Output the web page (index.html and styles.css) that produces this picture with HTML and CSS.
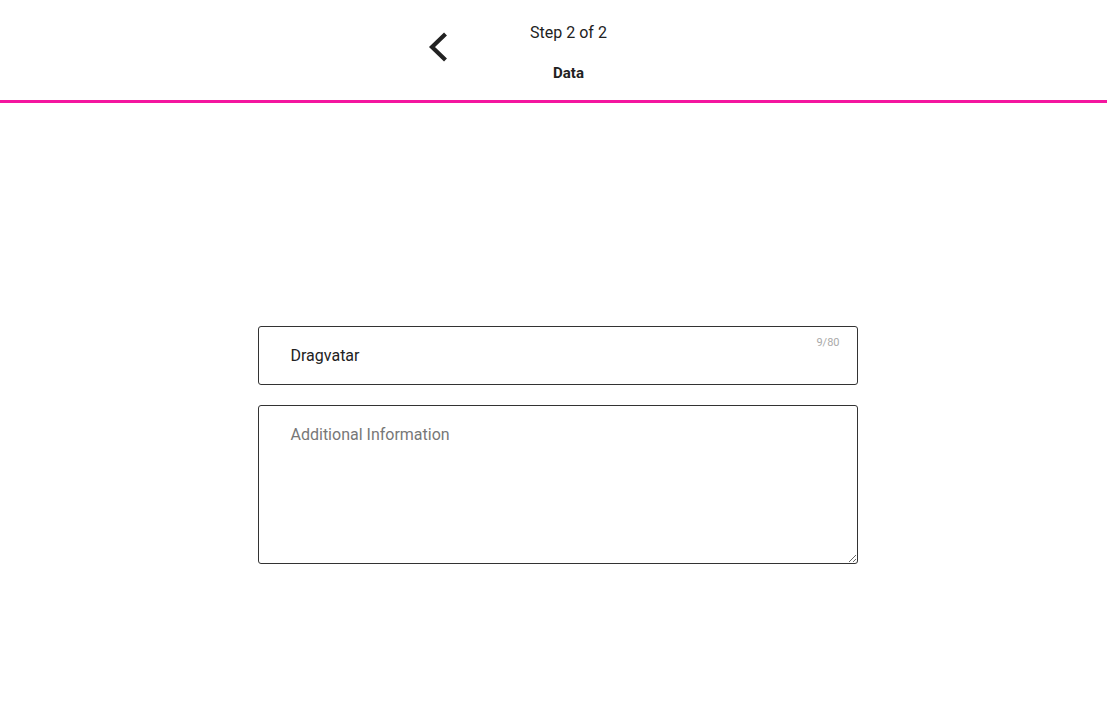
FILE: index.html
```html
<!DOCTYPE html>
<html lang="en">
  <head>
    <meta charset="UTF-8" />
    <meta name="viewport" content="width=device-width, initial-scale=1.0" />
    <title>Data</title>
    <link rel="stylesheet" href="styles.css">
  </head>
  <body>
    <header class="topbar">
      <div class="topbar-inner">
        <button class="back" aria-label="Back">
          <svg width="24" height="32" viewBox="0 0 24 32">
            <path d="M17.5 3 L4 16 L17.5 29" fill="none" stroke="#222" stroke-width="4.2" stroke-linecap="butt" stroke-linejoin="miter" />
          </svg>
        </button>
        <div class="title">
          <span class="step">Step 2 of 2</span>
          <span class="name">Data</span>
        </div>
      </div>
    </header>
    <main class="form">
      <div class="field">
        <input type="text" value="Dragvatar" maxlength="80" />
        <span class="counter">9/80</span>
      </div>
      <textarea placeholder="Additional Information"></textarea>
    </main>
  </body>
</html>
```

FILE: styles.css
```css
* {
  margin: 0;
  padding: 0;
  box-sizing: border-box;
}
body {
  background-color: #ffffff;
  color: #222222;
  font-family: "Roboto", "Noto Sans", sans-serif;
}
.topbar {
  height: 103px;
  border-bottom: 3px solid #f4169f;
}
.topbar-inner {
  width: 252px;
  margin: 0 auto;
  display: flex;
  height: 100%;
}
.back {
  border: none;
  background: none;
  width: 24px;
  height: 32px;
  margin-top: 31px;
  align-self: flex-start;
  cursor: pointer;
}
.back svg {
  display: block;
}
.title {
  flex: 1;
  display: flex;
  flex-direction: column;
  align-items: center;
  padding-left: 6px;
  padding-top: 22px;
}
.step {
  font-size: 16px;
  line-height: 22px;
}
.name {
  margin-top: 19px;
  font-size: 15px;
  font-weight: bold;
  line-height: 20px;
}
.form {
  width: 600px;
  margin-left: calc(50% - 296px);
  padding-top: 223px;
  display: flex;
  flex-direction: column;
  gap: 20px;
}
.field {
  position: relative;
}
input,
textarea {
  width: 100%;
  border: 1px solid #333333;
  border-radius: 3px;
  font-family: inherit;
  font-size: 16px;
  color: #222222;
  padding: 0 32px;
  outline: none;
}
input {
  height: 59px;
}
textarea {
  height: 159px;
  padding-top: 19px;
  resize: vertical;
}
textarea::placeholder {
  color: #777777;
}
.counter {
  position: absolute;
  top: 10px;
  right: 18px;
  font-size: 11px;
  color: #aaaaaa;
}
```
